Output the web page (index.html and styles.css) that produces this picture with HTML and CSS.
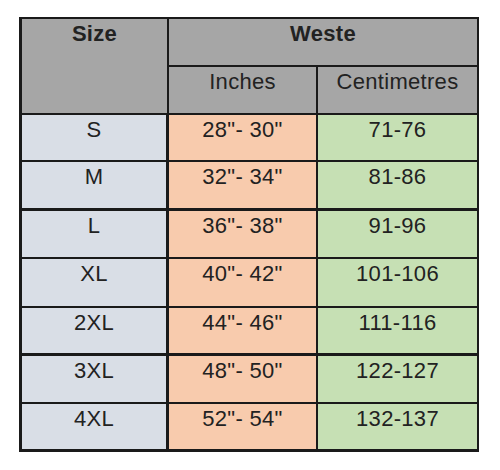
FILE: index.html
```html
<!DOCTYPE html>
<html>
<head>
<meta charset="utf-8">
<link rel="stylesheet" href="styles.css">
</head>
<body>
<table class="chart">
  <colgroup>
    <col class="c-size">
    <col class="c-in">
    <col class="c-cm">
  </colgroup>
  <thead>
    <tr class="h1">
      <th rowspan="2" class="size-h">Size</th>
      <th colspan="2" class="weste">Weste</th>
    </tr>
    <tr class="h2">
      <th class="sub in">Inches</th>
      <th class="sub cm">Centimetres</th>
    </tr>
  </thead>
  <tbody>
    <tr class="r45"><td class="sz">S</td><td class="in">28"- 30"</td><td class="cm">71-76</td></tr>
    <tr class="r46 thick"><td class="sz">M</td><td class="in">32"- 34"</td><td class="cm">81-86</td></tr>
    <tr class="r46"><td class="sz">L</td><td class="in">36"- 38"</td><td class="cm">91-96</td></tr>
    <tr class="r47"><td class="sz">XL</td><td class="in">40"- 42"</td><td class="cm">101-106</td></tr>
    <tr class="r45 thick"><td class="sz">2XL</td><td class="in">44"- 46"</td><td class="cm">111-116</td></tr>
    <tr class="r46"><td class="sz">3XL</td><td class="in">48"- 50"</td><td class="cm">122-127</td></tr>
    <tr class="r45 thick"><td class="sz">4XL</td><td class="in">52"- 54"</td><td class="cm">132-137</td></tr>
  </tbody>
</table>
</body>
</html>
```
FILE: styles.css
```css
html, body {
  margin: 0;
  padding: 0;
  background: #ffffff;
}

.chart {
  margin: 17px 0 0 19px;
  border-collapse: separate;
  border-spacing: 0;
  border-top: 2px solid #1a1a1a;
  border-left: 3px solid #1a1a1a;
  table-layout: fixed;
  font-family: "Liberation Sans", Arial, sans-serif;
  font-size: 22px;
  line-height: 24px;
  color: #222222;
}

.c-size { width: 147px; }
.c-in { width: 149px; }
.c-cm { width: 161px; }

.chart th,
.chart td {
  padding: 3px 0 0 0;
  text-align: center;
  vertical-align: top;
  letter-spacing: 0.3px;
  border-bottom: 2px solid #1a1a1a;
  border-right: 2px solid #1a1a1a;
}

.chart th {
  background: #a6a6a6;
}

.size-h {
  font-weight: bold;
  padding-top: 3px;
  border-right-width: 3px;
  border-bottom-width: 3px;
}

.weste {
  font-weight: bold;
  letter-spacing: 0.8px;
  height: 43px;
  padding-top: 3px;
}

.sub {
  font-weight: normal;
  letter-spacing: 0.8px;
  height: 43px;
  border-bottom-width: 3px;
}

.chart td.sz {
  background: #d9dee6;
  border-right-width: 3px;
}

.chart td.in {
  background: #f8cbad;
}

.chart td.cm {
  background: #c6e0b4;
}

.r45 td { height: 42px; }
.r46 td { height: 43px; }
.r47 td { height: 44px; }

.thick td {
  border-bottom-width: 3px;
}
```
